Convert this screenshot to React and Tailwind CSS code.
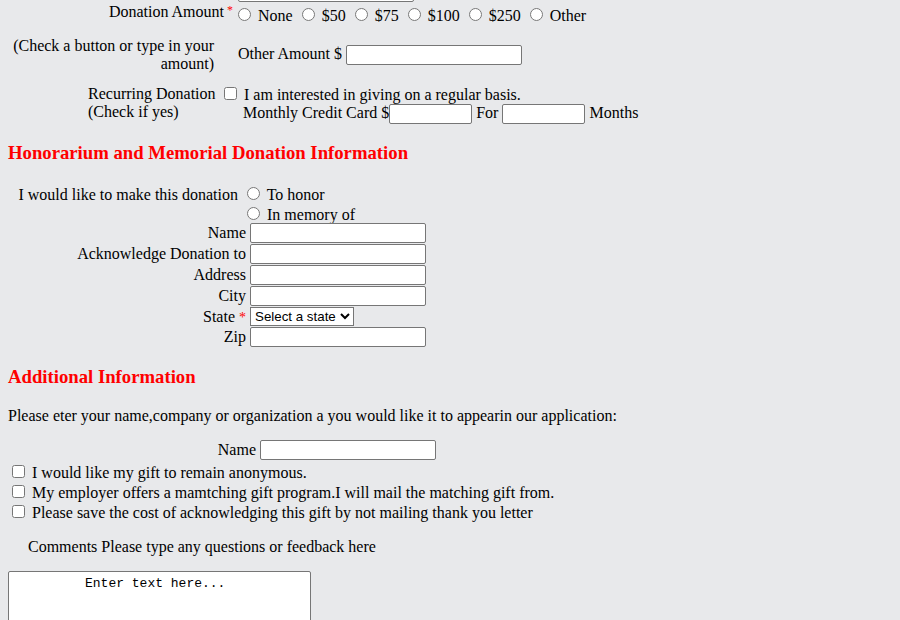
const field = "h-[20px] w-[176px] rounded-[2px] border border-[#767676] bg-white px-[2px] font-['Liberation_Sans',sans-serif] text-[13px]";
const small = "inline-block h-[20px] w-[83px] rounded-[2px] border border-[#767676] bg-white px-[2px] align-middle font-['Liberation_Sans',sans-serif] text-[13px]";
const radio = "ml-[5px] mr-[3px] mt-[3px] align-baseline";
const check = "ml-[4px] mr-[3px] mt-[3px] align-baseline";

function Star() {
  return <span className="ml-[3px] align-top text-[12px] text-[#ff0000]">*</span>;
}

function FieldRow({ label, width = "w-[246px]", children }) {
  return (
    <div className="flex h-[20px] items-center">
      <div className={`${width} text-right whitespace-nowrap`}>{label}</div>
      <div className="ml-[4px] flex">{children}</div>
    </div>
  );
}

export default function App() {
  const amounts = ["None", "$50", "$75", "$100", "$250", "Other"];

  return (
    <div className="h-[620px] overflow-hidden bg-[#e8e9eb] font-['Liberation_Serif',serif] text-[16px] leading-[normal] text-black">
      {/* Donation amount */}
      <div className="-mt-[19px] flex">
        <div className="w-[233px] pt-[22px] text-right whitespace-nowrap">
          Donation Amount<Star />
        </div>
        <div>
          <input type="text" className={`ml-[5px] block h-[21px] ${field}`} />
          <div className="mt-[3px] whitespace-nowrap">
            {amounts.map((a) => (
              <span key={a}>
                <input type="radio" name="amount" className={radio} />{" "}
                {a}{" "}
              </span>
            ))}
          </div>
        </div>
      </div>

      <div className="mt-[12px] flex items-center">
        <div className="ml-[12px] w-[202px] text-right whitespace-nowrap">
          (Check a button or type in your
          <br />
          amount)
        </div>
        <div className="ml-[24px] flex items-center gap-[4px] pb-[1px] whitespace-nowrap">
          <span className="mb-[2px]">Other Amount $</span>
          <input type="text" className={field} />
        </div>
      </div>

      <div className="mt-[11px] flex items-start">
        <div className="ml-[88px] w-[128px] pt-[1px] whitespace-nowrap">
          Recurring Donation
          <br />
          (Check if yes)
        </div>
        <div className="whitespace-nowrap">
          <div>
            <input type="checkbox" className="ml-[8px] mr-[3px] mt-[3px] align-baseline" /> I am interested in giving on a regular basis.
          </div>
          <div className="pl-[27px]">
            Monthly Credit Card $
            <input type="text" className={small} />{" "}
            For{" "}
            <input type="text" className={small} />{" "}
            Months
          </div>
        </div>
      </div>

      {/* Honorarium */}
      <h3 className="mt-[18px] pl-[8px] text-[18.72px] font-bold text-[#ff0000]">
        Honorarium and Memorial Donation Information
      </h3>

      <div className="mt-[20px] flex items-start">
        <div className="w-[238px] pt-[2px] text-right whitespace-nowrap">I would like to make this donation</div>
        <div className="ml-[4px] whitespace-nowrap">
          <div>
            <input type="radio" name="honor" className={radio} /> To honor
          </div>
          <div>
            <input type="radio" name="honor" className={radio} /> In memory of
          </div>
        </div>
      </div>

      <div className="-mt-[1px] flex flex-col gap-[1px]">
        <FieldRow label="Name">
          <input type="text" className={field} />
        </FieldRow>
        <FieldRow label="Acknowledge Donation to">
          <input type="text" className={field} />
        </FieldRow>
        <FieldRow label="Address">
          <input type="text" className={field} />
        </FieldRow>
        <FieldRow label="City">
          <input type="text" className={field} />
        </FieldRow>
        <div className="flex h-[19px] items-center">
          <div className="w-[246px] text-right whitespace-nowrap">
            State<span className="ml-[4px] text-[14px] text-[#ff0000]">*</span>
          </div>
          <select className="ml-[4px] h-[19px] w-[104px] border border-[#767676] bg-white font-['Liberation_Sans',sans-serif] text-[13.33px]">
            <option>Select a state</option>
          </select>
        </div>
        <FieldRow label="Zip">
          <input type="text" className={field} />
        </FieldRow>
      </div>

      {/* Additional */}
      <h3 className="mt-[19px] pl-[8px] text-[18.72px] font-bold text-[#ff0000]">Additional Information</h3>

      <p className="mt-[19px] pl-[8px] whitespace-nowrap">
        Please eter your name,company or organization a you would like it to appearin our application:
      </p>

      <div className="mt-[15px]">
        <FieldRow label="Name" width="w-[256px]">
          <input type="text" className={field} />
        </FieldRow>
      </div>

      <div className="mt-[2px] pl-[8px] whitespace-nowrap">
        <div>
          <input type="checkbox" className={check} /> I would like my gift to remain anonymous.
        </div>
        <div>
          <input type="checkbox" className={check} /> My employer offers a mamtching gift program.I will mail the matching gift from.
        </div>
        <div>
          <input type="checkbox" className={check} /> Please save the cost of acknowledging this gift by not mailing thank you letter
        </div>
      </div>

      <p className="mt-[16px] pl-[28px] whitespace-nowrap">Comments Please type any questions or feedback here</p>

      <textarea
        className="mt-[15px] ml-[8px] block h-[80px] w-[303px] resize-none rounded-[2px] border border-[#767676] bg-white pl-[76px] pt-[4px] font-['Liberation_Mono',monospace] text-[13px] leading-[normal]"
        defaultValue="Enter text here..."
      />
    </div>
  );
}
